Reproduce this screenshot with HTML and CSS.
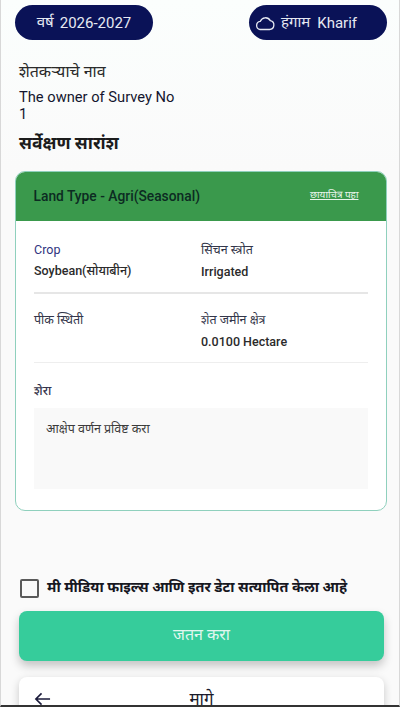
FILE: index.html
```html
<!DOCTYPE html>
<html lang="mr">
<head>
<meta charset="utf-8">
<title>सर्वेक्षण सारांश</title>
<link rel="stylesheet" href="styles.css">
</head>
<body>
<main class="screen">
  <header class="topbar">
    <div class="pill"><span>वर्ष</span><span>2026-2027</span></div>
    <div class="pill pill-season">
      <svg class="cloud" viewBox="0 0 20 16" aria-hidden="true"><path d="M5 14.5h9.5a4.5 4.5 0 0 0 .8-8.9A5.6 5.6 0 0 0 5.2 6.4 4.1 4.1 0 0 0 5 14.5z"/></svg>
      <span class="season-label">हंगाम</span><span>Kharif</span>
    </div>
  </header>
  <section class="owner">
    <div class="owner-label">शेतकऱ्याचे नाव</div>
    <div class="owner-name">The owner of Survey No<br>1</div>
  </section>
  <h1 class="title">सर्वेक्षण सारांश</h1>
  <section class="card">
    <div class="card-head">
      <span class="land">Land Type - Agri(Seasonal)</span>
      <a class="photo">छायाचित्र पहा</a>
    </div>
    <div class="card-body">
      <div class="row row-first">
        <div class="cell"><div class="label label-blue">Crop</div><div class="value value-crop">Soybean(सोयाबीन)</div></div>
        <div class="cell"><div class="label">सिंचन स्त्रोत</div><div class="value">Irrigated</div></div>
      </div>
      <div class="row row-second">
        <div class="cell"><div class="label">पीक स्थिती</div></div>
        <div class="cell"><div class="label">शेत जमीन क्षेत्र</div><div class="value">0.0100 Hectare</div></div>
      </div>
      <div class="remark-label">शेरा</div>
      <div class="remark-box">आक्षेप वर्णन प्रविष्ट करा</div>
    </div>
  </section>
  <label class="confirm">
    <span class="checkbox"></span>
    <span>मी मीडिया फाइल्स आणि इतर डेटा सत्यापित केला आहे</span>
  </label>
  <button class="save">जतन करा</button>
  <button class="back">
    <svg class="arrow" viewBox="0 0 18 14" aria-hidden="true"><path d="M17 7H2M8 1L2 7l6 6"/></svg>
    <span>मागे</span>
  </button>
</main>
</body>
</html>
```
FILE: styles.css
```css
* { box-sizing: border-box; }
html, body { margin: 0; padding: 0; }
body {
  width: 400px;
  height: 707px;
  overflow: hidden;
  background: #fafafa;
  font-family: Roboto, "Noto Sans Devanagari", "Noto Sans", sans-serif;
  color: #14162e;
}
.screen {
  height: 707px;
  overflow: hidden;
  border-left: 1px solid #d8d8d8;
  border-right: 1px solid #d8d8d8;
  border-bottom: 2px solid #333;
  padding: 5px 12px 0 14px;
  background: linear-gradient(#fbfefd, #fafafa 170px);
}
.topbar { display: flex; justify-content: space-between; }
.pill {
  width: 138px;
  height: 35px;
  border-radius: 18px;
  background: #0a1257;
  color: #e6e9f2;
  display: flex;
  align-items: center;
  justify-content: center;
  gap: 6px;
  font-size: 15px;
  font-weight: 400;
}
.pill-season { gap: 0; justify-content: flex-start; padding-left: 6px; }
.cloud { width: 20px; height: 16px; fill: none; stroke: #e6e9f2; stroke-width: 1.3; }
.season-label { margin: 0 7px 0 6px; }
.owner { margin: 22px 0 0 4px; }
.owner-label { font-size: 16px; line-height: 20px; color: #2a2a2a; }
.owner-name { margin-top: 7px; font-size: 14.7px; line-height: 17px; font-weight: 400; color: #14162e; }
.title { margin: 8px 0 0 4px; font-size: 17.5px; line-height: 24px; font-weight: 700; color: #1c1c1c; }
.card {
  margin-top: 16px;
  height: 340px;
  border: 1.5px solid #8fd0bd;
  border-radius: 10px;
  background: #fff;
  overflow: hidden;
}
.card-head {
  height: 50px;
  background: #3a994c;
  display: flex;
  align-items: center;
  justify-content: space-between;
  padding: 0 29px 0 19px;
  margin: -1.5px -1.5px 0;
}
.land { font-size: 13.8px; font-weight: 500; color: #0c2b22; }
.photo { font-size: 10px; color: #e9f5ec; text-decoration: underline; }
.card-body { padding: 0 18px; }
.row { display: grid; grid-template-columns: 167px 1fr; }
.row-first { padding: 20px 0 0; height: 73px; border-bottom: 2px solid #e6e6e6; }
.row-second { padding: 17px 0 0; height: 69px; border-bottom: 1px solid #eeeeee; }
.label { font-size: 12.5px; line-height: 18px; color: #33364a; }
.label-blue { color: #2f3480; }
.value { margin-top: 5px; font-size: 12.5px; line-height: 16px; font-weight: 500; color: #2b2b2b; }
.value-crop { margin-top: 4px; }
.remark-label { margin-top: 19px; font-size: 12.5px; line-height: 18px; font-weight: 500; color: #33344a; }
.remark-box {
  margin-top: 8px;
  height: 81px;
  background: #f9f9f9;
  padding: 12px 12px;
  font-size: 12.5px;
  line-height: 18px;
  color: #3c3c3c;
}
.confirm {
  margin: 68px 0 0 5px;
  display: flex;
  align-items: center;
  gap: 8px;
  font-size: 14.4px;
  font-weight: 700;
  color: #17171f;
}
.checkbox {
  width: 19px;
  height: 19px;
  border: 2px solid #5a5a5a;
  border-radius: 2px;
  flex: none;
}
.save {
  display: block;
  margin: 13px 3px 0 4px;
  width: 365px;
  height: 50px;
  border: 0;
  border-radius: 8px;
  background: #36cc9b;
  color: #e2f7ef;
  font: inherit;
  font-size: 16px;
  box-shadow: 0 5px 10px rgba(0,0,0,.22);
}
.back {
  display: block;
  position: relative;
  margin: 16px 3px 0 4px;
  width: 365px;
  height: 50px;
  border: 0;
  border-radius: 8px;
  background: #fff;
  color: #1a1a2a;
  font: inherit;
  font-size: 17px;
  text-align: center;
  padding: 0 0 3px;
  box-shadow: 0 3px 8px rgba(0,0,0,.2);
}
.arrow {
  position: absolute;
  left: 15px;
  top: 15px;
  width: 17px;
  height: 14px;
  fill: none;
  stroke: #1a1a3a;
  stroke-width: 1.7;
}
```
